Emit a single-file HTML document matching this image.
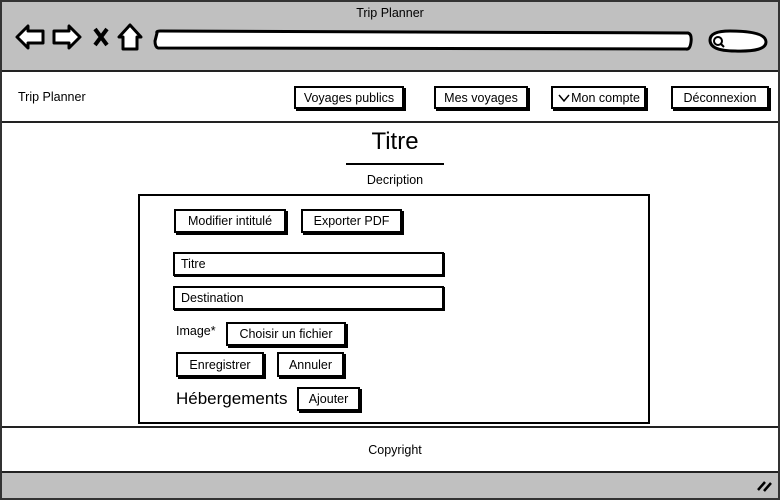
<!DOCTYPE html>
<html><head><meta charset="utf-8"><style>
*{margin:0;padding:0;box-sizing:border-box}
body{width:780px;height:500px;overflow:hidden;background:#fff;font-family:"Liberation Sans",sans-serif;color:#000;position:relative}
.a{position:absolute}
.btn{position:absolute;border:2px solid #000;background:#fff;box-shadow:2px 2px 0 #000;font-size:12.5px;display:flex;align-items:center;justify-content:center;white-space:nowrap}
.inp{position:absolute;border:2px solid #000;background:#fff;box-shadow:1px 1px 0 #000;font-size:12.5px;padding-left:6px;display:flex;align-items:center}
</style></head><body>
<div class="a" style="left:0;top:0;width:780px;height:500px;border:2px solid #333"></div>
<div class="a" style="left:2px;top:2px;width:776px;height:70px;background:#c0c0c0;border-bottom:2px solid #222"></div>
<div class="a" style="left:0;top:6px;width:780px;text-align:center;font-size:12.5px">Trip Planner</div>
<svg class="a" style="left:0;top:0" width="780" height="72">
<g fill="#fff" stroke="#000" stroke-width="3" stroke-linejoin="round">
<path d="M17 37 L28 26 L28 31 L43 31 L43 43 L28 43 L28 48 Z"/>
<path d="M80 37 L69 26 L69 31 L54 31 L54 43 L69 43 L69 48 Z"/>
<path d="M130 25 L119 37 L123 37 L123 49 L137 49 L137 37 L141 37 Z"/>
<path d="M157 33 Q156 31 160 31 L688 33 Q692 34 691 42 Q690 50 686 49 L158 48 Q155 47 155 41 Z"/>
<path d="M710 40 Q710 31 730 31 Q766 31 766 42 Q766 52 735 51 Q710 51 710 40 Z"/>
</g>
<path d="M95 29 L107 45 M107 29 L95 45" stroke="#000" stroke-width="4"/>
<circle cx="718" cy="41" r="4" fill="none" stroke="#000" stroke-width="2"/><path d="M721 44 L724 47" stroke="#000" stroke-width="2"/>
</svg>
<div class="a" style="left:2px;top:121px;width:776px;height:2px;background:#222"></div>
<div class="a" style="left:18px;top:90px;font-size:12.5px">Trip Planner</div>
<div class="btn" style="left:294px;top:86px;width:110px;height:23px">Voyages publics</div>
<div class="btn" style="left:434px;top:86px;width:94px;height:23px">Mes voyages</div>
<div class="btn" style="left:551px;top:86px;width:95px;height:23px"><svg width="14" height="10"><path d="M2 2 L7 8 L12 2" fill="none" stroke="#000" stroke-width="1.5"/></svg>Mon compte</div>
<div class="btn" style="left:671px;top:86px;width:98px;height:23px">Déconnexion</div>
<div class="a" style="left:0;top:128px;width:780px;text-align:center;font-size:24px;padding-left:10px">Titre</div>
<div class="a" style="left:346px;top:163px;width:98px;height:2px;background:#000"></div>
<div class="a" style="left:0;top:173px;width:780px;text-align:center;font-size:12.5px;padding-left:10px">Decription</div>
<div class="a" style="left:138px;top:194px;width:512px;height:230px;border:2px solid #000"></div>
<div class="btn" style="left:174px;top:209px;width:112px;height:24px">Modifier intitulé</div>
<div class="btn" style="left:301px;top:209px;width:101px;height:24px">Exporter PDF</div>
<div class="inp" style="left:173px;top:252px;width:271px;height:24px">Titre</div>
<div class="inp" style="left:173px;top:286px;width:271px;height:24px">Destination</div>
<div class="a" style="left:176px;top:324px;font-size:12.5px">Image*</div>
<div class="btn" style="left:226px;top:322px;width:120px;height:24px">Choisir un fichier</div>
<div class="btn" style="left:176px;top:352px;width:88px;height:25px">Enregistrer</div>
<div class="btn" style="left:277px;top:352px;width:67px;height:25px">Annuler</div>
<div class="a" style="left:176px;top:389px;font-size:17px">Hébergements</div>
<div class="btn" style="left:297px;top:387px;width:63px;height:24px">Ajouter</div>
<div class="a" style="left:2px;top:426px;width:776px;height:2px;background:#222"></div>
<div class="a" style="left:0;top:443px;width:780px;text-align:center;font-size:12.5px;padding-left:10px">Copyright</div>
<div class="a" style="left:2px;top:471px;width:776px;height:27px;background:#c0c0c0;border-top:2px solid #222"></div>
<svg class="a" style="left:755px;top:478px" width="20" height="16"><path d="M3 12 L10 4 M9 13 L16 5" stroke="#000" stroke-width="2.5"/></svg>
</body></html>
